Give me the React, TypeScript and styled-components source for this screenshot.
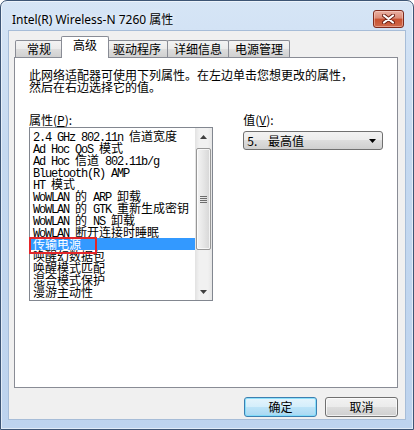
import React from 'react';
import styled, { createGlobalStyle } from 'styled-components';

const cjk = `"Noto Sans CJK SC", "Noto Sans", sans-serif`;

const GlobalStyle = createGlobalStyle`
  html, body {
    margin: 0;
    padding: 0;
    background: #ffffff;
  }
  body {
    font-family: ${cjk};
    font-size: 12px;
  }
  * {
    box-sizing: border-box;
  }
`;

const Window = styled.div`
  width: 414px;
  height: 430px;
  display: flex;
  flex-direction: column;
  padding: 0 7px 9px;
  border: 1px solid #3d5575;
  border-radius: 7px 7px 0 0;
  background: linear-gradient(to bottom, #d6e5f6 0%, #c5d9f0 35%, #bdd3ee 100%);
  box-shadow: inset 0 0 0 1px rgba(255, 255, 255, 0.55);
`;

const TitleBar = styled.div`
  height: 29px;
  display: flex;
  align-items: flex-start;
  justify-content: space-between;
  padding-left: 4px;
`;

const Title = styled.div`
  padding-top: 11px;
  font: 12px/16px "Noto Sans", "Noto Sans CJK SC", sans-serif;
  color: #000;
  text-shadow: 0 0 6px rgba(255, 255, 255, 0.9);
`;

const CloseButton = styled.div`
  width: 31px;
  height: 18px;
  margin: 9px 2px 0 0;
  display: flex;
  align-items: center;
  justify-content: center;
  border: 1px solid #7e2a1c;
  border-radius: 3px;
  background: linear-gradient(#eab1a3 0%, #db8a76 45%, #c8502f 50%, #cf6a4c 100%);
  box-shadow: inset 0 0 0 1px rgba(255, 220, 210, 0.45);
`;

const Client = styled.div`
  flex: 1;
  display: flex;
  flex-direction: column;
  background: #f0f0f0;
  border: 1px solid #a7bdd8;
  padding: 5px 7px 2px 5px;
`;

const TabStrip = styled.div`
  height: 21px;
  display: flex;
  align-items: flex-end;
  padding-left: 1px;
`;

const Tab = styled.div<{ $active?: boolean }>`
  position: relative;
  z-index: ${p => (p.$active ? 2 : 1)};
  min-width: 48px;
  height: ${p => (p.$active ? 22 : 17)}px;
  margin: ${p => (p.$active ? '0 -2px -1px -2px' : '0 0 0 -1px')};
  padding: ${p => (p.$active ? '1px 6px 0' : '0 6px')};
  display: flex;
  align-items: ${p => (p.$active ? 'flex-start' : 'center')};
  justify-content: center;
  border: 1px solid #898c95;
  border-bottom: none;
  border-radius: 2px 2px 0 0;
  background: ${p =>
    p.$active
      ? '#ffffff'
      : 'linear-gradient(#f3f3f3, #ebebeb 50%, #dedede 50%, #d0d0d0)'};
  font: 12px/14px ${cjk};
  color: #000;

  &:first-child {
    margin-left: 0;
  }
`;

const Panel = styled.div`
  height: 331px;
  background: #ffffff;
  border: 1px solid #898c95;
  padding: 11px 14px 0;
`;

const Description = styled.p`
  margin: 0;
  width: 330px;
  font: 12px/12px ${cjk};
  color: #000;
`;

const Columns = styled.div`
  display: flex;
  gap: 30px;
  margin-top: 21px;
`;

const Column = styled.div<{ $width: number }>`
  width: ${p => p.$width}px;
  display: flex;
  flex-direction: column;
`;

const Label = styled.div`
  height: 12px;
  font: 12px/12px ${cjk};
  color: #000;
`;

const Key = styled.span`
  text-decoration: underline;
`;

const ListBox = styled.div`
  position: relative;
  margin-top: 1px;
  height: 174px;
  display: flex;
  border: 1px solid #828790;
  background: #ffffff;
`;

const Items = styled.div`
  flex: 1;
  padding-top: 2px;
`;

const Item = styled.div<{ $selected?: boolean }>`
  height: 12px;
  padding-left: 3px;
  white-space: nowrap;
  font: 12px/12px ${cjk};
  color: ${p => (p.$selected ? '#ffffff' : '#000000')};
  background: ${p => (p.$selected ? '#3399ff' : 'transparent')};
`;

const Latin = styled.span`
  font-family: "Liberation Mono", monospace;
  font-size: 12px;
  letter-spacing: -1.2px;
`;

const Marker = styled.div`
  position: absolute;
  left: -1px;
  width: 68px;
  height: 17px;
  border: 2px solid #e3262a;
  pointer-events: none;
`;

const ScrollBar = styled.div`
  width: 17px;
  display: flex;
  flex-direction: column;
  background: linear-gradient(to right, #e2e2e2, #f1f1f1 25%, #f1f1f1 75%, #e6e6e6);
`;

const ArrowButton = styled.div`
  height: 17px;
  display: flex;
  align-items: center;
  justify-content: center;
`;

const Thumb = styled.div`
  height: 102px;
  margin: 3px 1px 0;
  display: flex;
  align-items: center;
  justify-content: center;
  border: 1px solid #979797;
  border-radius: 2px;
  background: linear-gradient(to right, #f4f4f4, #e6e6e6 50%, #d6d6d6);
  box-shadow: inset 0 0 0 1px rgba(255, 255, 255, 0.7);
`;

const Track = styled.div`
  flex: 1;
`;

const Select = styled.div`
  margin-top: 5px;
  height: 19px;
  display: flex;
  align-items: center;
  justify-content: space-between;
  padding: 0 6px 0 3px;
  border: 1px solid #707070;
  border-radius: 3px;
  background: linear-gradient(#f2f2f2, #ebebeb 49%, #dddddd 50%, #cfcfcf);
  font: 12px/14px ${cjk};
  color: #000;
  word-spacing: 8px;
`;

const ButtonRow = styled.div`
  display: flex;
  justify-content: flex-end;
  gap: 8px;
  margin-top: 9px;
`;

const Button = styled.button<{ $primary?: boolean }>`
  width: 73px;
  height: 20px;
  padding: 0;
  border: 1px solid ${p => (p.$primary ? '#3c7fb1' : '#707070')};
  border-radius: 3px;
  background: ${p =>
    p.$primary
      ? 'linear-gradient(#e5f4fc, #d4eefb 49%, #bde4f8 50%, #a9d8f2)'
      : 'linear-gradient(#f2f2f2, #ebebeb 49%, #dddddd 50%, #cfcfcf)'};
  box-shadow: inset 0 0 0 1px ${p => (p.$primary ? 'rgba(120, 220, 250, 0.8)' : 'rgba(255, 255, 255, 0.7)')};
  font: 12px/18px ${cjk};
  color: #000;
`;

const tabs = ['常规', '高级', '驱动程序', '详细信息', '电源管理'];

const properties = [
  '2.4 GHz 802.11n 信道宽度',
  'Ad Hoc QoS 模式',
  'Ad Hoc 信道 802.11b/g',
  'Bluetooth(R) AMP',
  'HT 模式',
  'WoWLAN 的 ARP 卸载',
  'WoWLAN 的 GTK 重新生成密钥',
  'WoWLAN 的 NS 卸载',
  'WoWLAN 断开连接时睡眠',
  '传输电源',
  '唤醒幻数据包',
  '唤醒模式匹配',
  '混合模式保护',
  '漫游主动性',
];

const SELECTED = 9;
const ROW = 12;

const mixed = (text: string) =>
  text
    .split(/([\x20-\x7e]+)/)
    .filter(Boolean)
    .map((part, i) =>
      /^[\x20-\x7e]+$/.test(part) ? <Latin key={i}>{part}</Latin> : <span key={i}>{part}</span>
    );

const Triangle = ({ up }: { up?: boolean }) => (
  <svg width="7" height="4" viewBox="0 0 7 4">
    <path d={up ? 'M0 4 L3.5 0 L7 4 Z' : 'M0 0 L7 0 L3.5 4 Z'} fill="#404040" />
  </svg>
);

const App = () => (
  <>
    <GlobalStyle />
    <Window>
      <TitleBar>
        <Title>Intel(R) Wireless-N 7260 属性</Title>
        <CloseButton>
          <svg width="13" height="10" viewBox="0 0 13 10">
            <path d="M2 1.5 L11 8.5 M11 1.5 L2 8.5" stroke="#6b1f14" strokeWidth="4" strokeLinecap="round" />
            <path d="M2 1.5 L11 8.5 M11 1.5 L2 8.5" stroke="#ffffff" strokeWidth="2.2" strokeLinecap="round" />
          </svg>
        </CloseButton>
      </TitleBar>
      <Client>
        <TabStrip>
          {tabs.map((t, i) => (
            <Tab key={t} $active={i === 1}>
              {t}
            </Tab>
          ))}
        </TabStrip>
        <Panel>
          <Description>
            此网络适配器可使用下列属性。在左边单击您想更改的属性，然后在右边选择它的值。
          </Description>
          <Columns>
            <Column $width={186}>
              <Label>
                属性(<Key>P</Key>):
              </Label>
              <ListBox>
                <Items>
                  {properties.map((p, i) => (
                    <Item key={p} $selected={i === SELECTED}>
                      {mixed(p)}
                    </Item>
                  ))}
                </Items>
                <ScrollBar>
                  <ArrowButton>
                    <Triangle up />
                  </ArrowButton>
                  <Thumb>
                    <svg width="7" height="7" viewBox="0 0 7 7">
                      <path d="M0 0.5 H7 M0 2.5 H7 M0 4.5 H7 M0 6.5 H7" stroke="#6d6d6d" strokeWidth="1" />
                    </svg>
                  </Thumb>
                  <Track />
                  <ArrowButton>
                    <Triangle />
                  </ArrowButton>
                </ScrollBar>
                <Marker style={{ top: 2 + SELECTED * ROW - 1 }} />
              </ListBox>
            </Column>
            <Column $width={141}>
              <Label>
                值(<Key>V</Key>):
              </Label>
              <Select>
                <span>5. 最高值</span>
                <svg width="7" height="4" viewBox="0 0 7 4">
                  <path d="M0 0 L7 0 L3.5 4 Z" fill="#000" />
                </svg>
              </Select>
            </Column>
          </Columns>
        </Panel>
        <ButtonRow>
          <Button $primary>确定</Button>
          <Button>取消</Button>
        </ButtonRow>
      </Client>
    </Window>
  </>
);

export default App;
